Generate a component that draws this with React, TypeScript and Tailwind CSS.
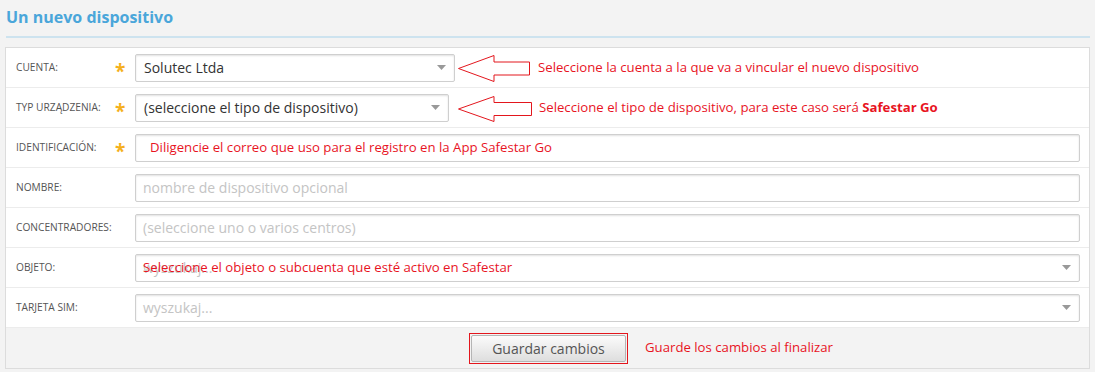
import React from "react";

const UI = { fontFamily: '"Open Sans", "Noto Sans", sans-serif' };
const ANN = { fontFamily: '"Open Sans", "Noto Sans", sans-serif' };

function Caret() {
  return (
    <svg width="9" height="5" viewBox="0 0 9 5" className="shrink-0">
      <polygon points="0,0 9,0 4.5,5" fill="#999" />
    </svg>
  );
}

function Arrow({ w, h }: { w: number; h: number }) {
  const head = 36;
  const mid = h / 2;
  const s = 6.5;
  return (
    <svg width={w} height={h} viewBox={`0 0 ${w} ${h}`} className="shrink-0">
      <polygon
        points={`0.5,${mid} ${head},0.5 ${head},${mid - s} ${w - 0.5},${mid - s} ${w - 0.5},${mid + s} ${head},${mid + s} ${head},${h - 0.5}`}
        fill="#fff"
        stroke="#e3161d"
        strokeWidth="1"
      />
    </svg>
  );
}

function Row({
  label,
  req,
  children,
}: {
  label: string;
  req?: boolean;
  children: React.ReactNode;
}) {
  return (
    <div className="flex h-[40px] items-center border-b border-[#ececec] bg-white">
      <div className="w-[109px] pl-[10px] text-[10.2px] uppercase text-[#555]">{label}</div>
      <div className="flex h-[18px] w-[20px] items-start justify-start pl-[0px] pt-[3px] text-[19px] font-bold leading-none text-[#f5b01c]">
        {req ? "*" : ""}
      </div>
      {children}
    </div>
  );
}

const box =
  "flex h-[28px] items-center rounded-[2px] border border-[#cfcfcf] bg-white shadow-[inset_0_1px_2px_rgba(0,0,0,0.12)]";

export default function App() {
  return (
    <div className="h-[372px] w-[1095px] bg-[#f3f3f3]" style={UI}>
      <div className="px-[6px]">
        <div className="flex h-[36px] items-center pb-[2px] text-[16px] font-bold text-[#4aa6da]">
          Un nuevo dispositivo
        </div>
        <div className="h-[2px] w-[1084px] bg-[#cde3ef]" />
      </div>
      <div className="ml-[5px] mt-[9px] w-[1085px] border border-[#dcdcdc]">
        <Row label="Cuenta:" req>
          <div className={`${box} w-[320px] justify-between pl-[8px] pr-[8px]`}>
            <span className="text-[14px] text-[#333]">Solutec Ltda</span>
            <Caret />
          </div>
          <div className="ml-[3px] mt-[1px]">
            <Arrow w={72} h={27} />
          </div>
          <span className="ml-[8px] text-[13.2px] text-[#e8141f]" style={ANN}>
            Seleccione la cuenta a la que va a vincular el nuevo dispositivo
          </span>
        </Row>
        <Row label="Typ urządzenia:" req>
          <div className={`${box} w-[314px] justify-between pl-[8px] pr-[8px]`}>
            <span className="text-[14px] text-[#333]">(seleccione el tipo de dispositivo)</span>
            <Caret />
          </div>
          <div className="ml-[9px] mt-[3px]">
            <Arrow w={74} h={26} />
          </div>
          <span className="ml-[7px] text-[13.2px] text-[#e8141f]" style={ANN}>
            Seleccione el tipo de dispositivo, para este caso será{" "}
            <span className="font-bold">Safestar Go</span>
          </span>
        </Row>
        <Row label="Identificación:" req>
          <div className={`${box} mr-[9px] flex-1 pl-[14px]`}>
            <span className="text-[13.2px] text-[#e8141f]" style={ANN}>
              Diligencie el correo que uso para el registro en la App Safestar Go
            </span>
          </div>
        </Row>
        <Row label="Nombre:">
          <div className={`${box} mr-[9px] flex-1 pl-[7px]`}>
            <span className="text-[14px] text-[#c4c4c4]">nombre de dispositivo opcional</span>
          </div>
        </Row>
        <Row label="Concentradores:">
          <div className={`${box} mr-[9px] flex-1 pl-[7px]`}>
            <span className="text-[14px] text-[#c4c4c4]">(seleccione uno o varios centros)</span>
          </div>
        </Row>
        <Row label="Objeto:">
          <div className={`${box} relative mr-[9px] flex-1 justify-between pl-[7px] pr-[8px]`}>
            <span className="text-[14px] text-[#c4c4c4]">wyszukaj...</span>
            <span
              className="absolute left-[7px] top-[3px] text-[13.2px] text-[#e8141f]"
              style={ANN}
            >
              Seleccione el objeto o subcuenta que esté activo en Safestar
            </span>
            <Caret />
          </div>
        </Row>
        <Row label="Tarjeta SIM:">
          <div className={`${box} mr-[9px] flex-1 justify-between pl-[7px] pr-[8px]`}>
            <span className="text-[14px] text-[#c4c4c4]">wyszukaj...</span>
            <Caret />
          </div>
        </Row>
        <div className="flex h-[40px] items-center bg-[#f3f3f3] pl-[463px]">
          <div className="border border-[#e3161d] p-[1px]">
            <div className="flex h-[27px] w-[155px] items-center justify-center rounded-[2px] border border-[#b5b5b5] bg-gradient-to-b from-[#fbfbfb] to-[#dedede] text-[14px] text-[#555]">
              Guardar cambios
            </div>
          </div>
          <span className="ml-[17px] text-[13.2px] text-[#e8141f]" style={ANN}>
            Guarde los cambios al finalizar
          </span>
        </div>
      </div>
    </div>
  );
}
